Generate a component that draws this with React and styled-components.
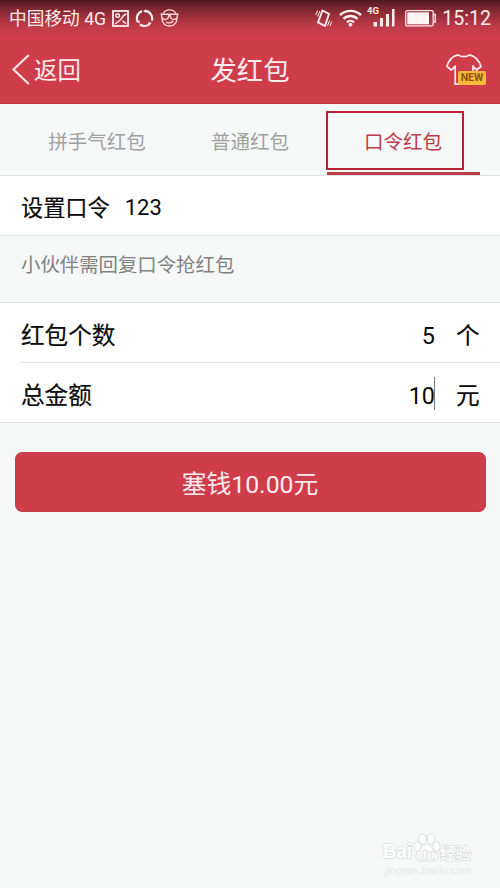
import React, { useState } from 'react';
import styled, { createGlobalStyle } from 'styled-components';

const GlobalStyle = createGlobalStyle`
    body {
        margin: 0;
        background: #f6f8f8;
        font-family: Roboto, "Noto Sans CJK SC", sans-serif;
    }

    * {
        box-sizing: border-box;
    }
`;

const Screen = styled.div`
    position: relative;
    width: 500px;
    height: 888px;
    overflow: hidden;
    background: #f6f8f8;
`;

const Header = styled.header`
    height: 104px;
    color: #ffecef;
    background: linear-gradient(#4c171c 0, #6b2229 5px, #9b303a 16px, #c13b49 27px, #cf3d4b 38px);
    border-bottom: 1px solid #bd3946;
`;

const StatusBar = styled.div`
    display: flex;
    align-items: center;
    justify-content: space-between;
    height: 36px;
    padding: 0 9px;
    font-size: 17.7px;
    line-height: 36px;
`;

const StatusGroup = styled.div`
    display: flex;
    align-items: center;
    height: 36px;

    svg {
        display: block;
        flex: none;
        margin-left: ${({ $gap }) => $gap}px;
    }
`;

const Carrier = styled.span`
    width: 97px;
    padding-top: 1px;
    white-space: nowrap;
`;

const Clock = styled.span`
    width: 49px;
    margin-left: 6px;
    padding-top: 2px;
    font-size: 19.6px;
    text-align: right;
    white-space: nowrap;
`;

const TitleBar = styled.div`
    display: grid;
    grid-template-columns: 120px 1fr 120px;
    align-items: center;
    height: 67px;
`;

const BackButton = styled.div`
    display: flex;
    align-items: center;
    gap: 4px;
    padding-left: 12px;
    font-size: 23.4px;
    line-height: 30px;
    cursor: pointer;
`;

const BackLabel = styled.span`
    padding-top: 2px;
`;

const Title = styled.h1`
    margin: 0;
    padding-top: 2px;
    font-size: 26.4px;
    font-weight: 400;
    line-height: 36px;
    text-align: center;
`;

const SkinButton = styled.div`
    position: relative;
    justify-self: end;
    width: 38px;
    height: 34px;
    margin-right: 16px;
    cursor: pointer;
`;

const NewBadge = styled.span`
    position: absolute;
    left: 12px;
    top: 18px;
    width: 28px;
    height: 14px;
    border-radius: 2px;
    background: #f9b93b;
    color: #8a5310;
    font-size: 10.6px;
    font-weight: 700;
    line-height: 14px;
    text-align: center;
`;

const Tabs = styled.nav`
    position: relative;
    display: grid;
    grid-template-columns: repeat(3, 153px);
    grid-template-rows: 71px;
    justify-content: center;
    height: 72px;
    border-bottom: 1px solid #dfe1e1;
`;

const Tab = styled.div`
    height: 71px;
    padding-top: 10px;
    border-bottom: 3px solid ${({ $active }) => ($active ? '#bd3a48' : 'transparent')};
    color: ${({ $active }) => ($active ? '#bd3a48' : '#a0a2a2')};
    font-size: 19.5px;
    line-height: 58px;
    text-align: center;
    cursor: pointer;
`;

const Highlight = styled.div`
    position: absolute;
    left: 326px;
    top: 7px;
    width: 138px;
    height: 59px;
    border: 2px solid #b3202f;
    pointer-events: none;
`;

const Hint = styled.div`
    height: 66px;
    padding: 15px 21px 0;
    color: #808282;
    font-size: 19.4px;
    line-height: 30px;
`;

const Panel = styled.section`
    padding-left: 21px;
    background: #fff;
    border-bottom: 1px solid #dfe1e1;
    border-top: ${({ $topLine }) => ($topLine ? '1px solid #dfe1e1' : 'none')};
`;

const Row = styled.div`
    display: flex;
    align-items: center;
    height: 59px;
    padding-top: ${({ $shift }) => $shift || 6}px;
    color: #0a0a0a;
    font-size: 23.6px;
    line-height: 36px;

    & + & {
        height: 60px;
        border-top: 1px solid #dfe1e1;
    }
`;

const Label = styled.span`
    font-size: ${({ $size }) => $size || 23.6}px;
    -webkit-text-stroke: 0.2px #0a0a0a;
`;

const Password = styled.span`
    margin-left: 15px;
    font-size: 22px;
`;

const Amount = styled.span`
    margin-left: auto;
    font-size: 23.4px;
`;

const Caret = styled.span`
    width: 1px;
    height: 33px;
    margin: -4px 0 0 -1px;
    background: ${({ $visible }) => ($visible ? '#777' : 'transparent')};
`;

const Unit = styled.span`
    width: 24px;
    margin: 0 20px 0 21px;
    -webkit-text-stroke: 0.2px #0a0a0a;
`;

const SubmitButton = styled.button`
    display: block;
    width: 471px;
    height: 60px;
    margin: 29px 0 0 14.5px;
    padding: 5px 0 0;
    border: 1px solid #c63c4a;
    border-radius: 7px;
    background: #cf3d4b;
    color: #ffecef;
    font-family: inherit;
    font-size: 24.8px;
    line-height: 36px;
    cursor: pointer;
`;

const Watermark = styled.div`
    position: absolute;
    left: 383px;
    top: 832px;
    width: 92px;
    height: 48px;
`;

function PictureIcon() {
    return (
        <svg width="17" height="17" viewBox="0 0 17 17" fill="none" stroke="#ffecef" strokeWidth="1.8">
            <rect x="1" y="1" width="15" height="15" />
            <circle cx="5.6" cy="5.6" r="1.8" strokeWidth="1.4" />
            <path d="M14.500 4C11.500 4.500 10.500 6.500 9.500 8.500S5.500 12 3 14M10.500 10.800l3.500 3" strokeWidth="1.5" />
        </svg>
    );
}

function SyncIcon() {
    return (
        <svg width="19" height="19" viewBox="0 0 19 19" fill="none" stroke="#ffecef" strokeWidth="2.200">
            <path d="M7 2.100A7.600 7.600 0 0 0 2.400 12M5 15.500A7.600 7.600 0 0 0 14.500 15M16.900 11.500A7.600 7.600 0 0 0 10 1.900" />
            <path d="M.6 12.600l3.900-1.400.2 3.300zM13 13.200l3.800.5-2.500 2.800zM10.800.4v3.500L8 2z" fill="#ffecef" stroke="none" />
        </svg>
    );
}

function CoolFaceIcon() {
    return (
        <svg width="19" height="18" viewBox="0 0 19 18" fill="none" stroke="#fadadd" strokeWidth="1.4">
            <path d="M3 4.500C4.500 2 6.500.9 9.500.9S14.500 2 16 4.500M1.800 9.500C2.500 14 5.500 17 9.500 17s7-3 7.700-7.500" />
            <path d="M.5 5.200h18M1.500 5.500c0 3.500 1.200 5 3.500 5s3.500-1.500 3.800-4h1.400c.3 2.500 1.500 4 3.800 4s3.500-1.500 3.500-5" />
            <path d="M6 13.300c3 1.200 5.300.6 7.200-1.400" />
        </svg>
    );
}

function VibrateIcon() {
    return (
        <svg width="18" height="19" viewBox="0 0 18 19" fill="none" stroke="#ffecef" strokeWidth="1">
            <path d="M7.500 1.500l6.500 3.300-4 12.200-7-3.600z" strokeWidth="1.900" strokeLinejoin="round" />
            <path d="M.7 6l2-4.500M2.500 7.500L5 2M12.500 16.800l2.300-5.300M15 17l1.700-4.500" />
        </svg>
    );
}

function WifiIcon() {
    return (
        <svg width="24" height="18" viewBox="-1 0 24 18" fill="none" stroke="#ffecef" strokeWidth="2.400">
            <path d="M1 6.200a15 15 0 0 1 21 0M4.500 9.900a10 10 0 0 1 14 0M7.900 13.300a5.200 5.200 0 0 1 7.200 0" />
            <circle cx="11.500" cy="15.600" r="1.900" fill="#ffecef" stroke="none" />
        </svg>
    );
}

function SignalIcon() {
    return (
        <svg width="33" height="24" viewBox="0 0 33 24" fill="#ffecef">
            <text x="0" y="7.500" fontSize="9.500" fontWeight="700">4G</text>
            <rect x="6.500" y="16" width="3.500" height="4.500" />
            <rect x="13" y="12" width="3" height="8.500" />
            <rect x="19" y="8" width="3" height="12.500" />
            <rect x="25" y="3" width="2.500" height="17.500" />
        </svg>
    );
}

function BatteryIcon() {
    return (
        <svg width="31" height="17" viewBox="0 0 31 17">
            <rect x=".7" y=".7" width="27.500" height="15.200" rx="1.500" fill="none" stroke="#ffecef" strokeWidth="1.300" />
            <rect x="2.300" y="2.300" width="21.700" height="12" fill="#fff3f4" />
            <path d="M28.500 4.500h1.800v7.500h-1.800" fill="none" stroke="#ffecef" strokeWidth="1.300" />
        </svg>
    );
}

function BackIcon() {
    return (
        <svg width="18" height="31" viewBox="0 0 18 31" fill="none" stroke="#ffecef" strokeWidth="2">
            <path d="M16.800 1L1.500 15.500 16.800 30" />
        </svg>
    );
}

function ShirtIcon() {
    return (
        <svg width="38" height="34" viewBox="0 0 38 34" fill="none" stroke="#ffecef" strokeWidth="1.700" strokeLinejoin="round">
            <path d="M20 31.200H9.200V13L5.500 17 .9 13.500C2.500 7.500 6.500 3 12 1.800c3 2.400 8.500 2.400 11.500 0C29 3 33 7.500 35 13.500L30.500 17 27 13v8" />
        </svg>
    );
}

function BaiduMark() {
    return (
        <svg width="92" height="48" viewBox="0 0 92 48" fill="#fdfefe" stroke="#dcdede" strokeWidth="1.600">
            <text x="0" y="26" fontSize="20.500" fontWeight="700" fontFamily="Liberation Sans" paintOrder="stroke" textLength="29" lengthAdjust="spacingAndGlyphs">Bai</text>
            <g strokeWidth="1">
                <ellipse cx="34.500" cy="14.500" rx="3.500" ry="4.800" />
                <ellipse cx="39.500" cy="7" rx="3.800" ry="5" />
                <ellipse cx="48" cy="7" rx="3.800" ry="5" />
                <ellipse cx="53.500" cy="14.500" rx="3.500" ry="4.800" />
                <path d="M43.500 12.500c3 0 4.500 2.500 6.500 5s5.500 4 4.500 8.500c-1 3.500-5 3.500-11 3.200-5.500.3-9.500.3-10.500-3.200-1-4.500 2-6 4-8.500s3.500-5 6.500-5z" />
            </g>
            <text x="36" y="26.500" fontSize="13" fontWeight="700" fontFamily="Liberation Sans" paintOrder="stroke">du</text>
            <text x="57" y="26.500" fontSize="15.500" fontWeight="500" paintOrder="stroke">经验</text>
            <text x="2" y="42" fontSize="11" fill="#e6e8e8" stroke="none" fontFamily="Liberation Sans" textLength="86">jingyan.baidu.com</text>
        </svg>
    );
}

const tabs = ['拼手气红包', '普通红包', '口令红包'];

function App() {
    const [activeTab, setActiveTab] = useState('口令红包');

    return (
        <Screen>
            <GlobalStyle />
            <Header>
                <StatusBar>
                    <StatusGroup $gap={6}>
                        <Carrier>中国移动 4G</Carrier>
                        <PictureIcon />
                        <SyncIcon />
                        <CoolFaceIcon />
                    </StatusGroup>
                    <StatusGroup $gap={5}>
                        <VibrateIcon />
                        <WifiIcon />
                        <SignalIcon />
                        <BatteryIcon />
                        <Clock>15:12</Clock>
                    </StatusGroup>
                </StatusBar>
                <TitleBar>
                    <BackButton>
                        <BackIcon />
                        <BackLabel>返回</BackLabel>
                    </BackButton>
                    <Title>发红包</Title>
                    <SkinButton>
                        <ShirtIcon />
                        <NewBadge>NEW</NewBadge>
                    </SkinButton>
                </TitleBar>
            </Header>

            <Tabs>
                {tabs.map((tab) => (
                    <Tab key={tab} $active={activeTab === tab} onClick={() => setActiveTab(tab)}>{tab}</Tab>
                ))}
                <Highlight />
            </Tabs>

            <Panel>
                <Row $shift={4}>
                    <Label $size={22.2}>设置口令</Label>
                    <Password>123</Password>
                </Row>
            </Panel>
            <Hint>小伙伴需回复口令抢红包</Hint>
            <Panel $topLine>
                <Row>
                    <Label>红包个数</Label>
                    <Amount>5</Amount>
                    <Caret />
                    <Unit>个</Unit>
                </Row>
                <Row>
                    <Label>总金额</Label>
                    <Amount>10</Amount>
                    <Caret $visible />
                    <Unit>元</Unit>
                </Row>
            </Panel>

            <SubmitButton>塞钱10.00元</SubmitButton>

            <Watermark><BaiduMark /></Watermark>
        </Screen>
    );
}

export default App;
